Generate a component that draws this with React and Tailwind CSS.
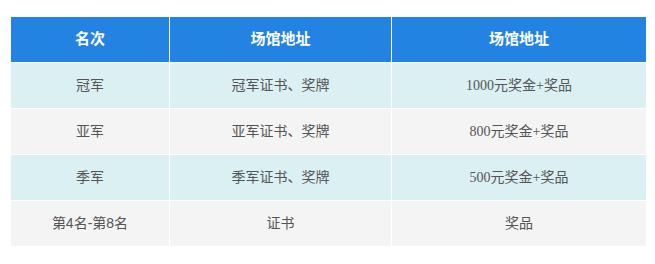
const rows = [
  { rank: '冠军', award: '冠军证书、奖牌', prize: '1000元奖金+奖品' },
  { rank: '亚军', award: '亚军证书、奖牌', prize: '800元奖金+奖品' },
  { rank: '季军', award: '季军证书、奖牌', prize: '500元奖金+奖品' },
  { rank: '第4名-第8名', award: '证书', prize: '奖品' },
];

const sans = "font-['Liberation_Sans','Noto_Sans_CJK_SC',sans-serif]";

export default function App() {
  return (
    <div className="w-[655px] h-[264px] bg-white pt-[17px] pl-[11px]">
      <div className={`grid grid-cols-[158px_221px_254px] gap-px w-[635px] ${sans}`}>
        {['名次', '场馆地址', '场馆地址'].map((h, i) => (
          <div
            key={i}
            className="h-[45px] bg-[#2383e2] text-white font-bold text-[15px] flex items-center justify-center"
          >
            {h}
          </div>
        ))}
        {rows.map((r, i) => {
          const bg = i % 2 === 0 ? 'bg-[#daf0f3]' : 'bg-[#f4f4f4]';
          return [
            <div key={`a${i}`} className={`h-[45px] ${bg} text-[#555] text-[14px] flex items-center justify-center`}>
              {r.rank}
            </div>,
            <div key={`b${i}`} className={`h-[45px] ${bg} text-[#555] text-[14px] flex items-center justify-center`}>
              {r.award}
            </div>,
            <div
              key={`c${i}`}
              className={`h-[45px] ${bg} text-[#555] text-[14px] flex items-center justify-center font-['Liberation_Serif','Noto_Sans_CJK_SC',serif]`}
            >
              {r.prize}
            </div>,
          ];
        })}
      </div>
    </div>
  );
}
